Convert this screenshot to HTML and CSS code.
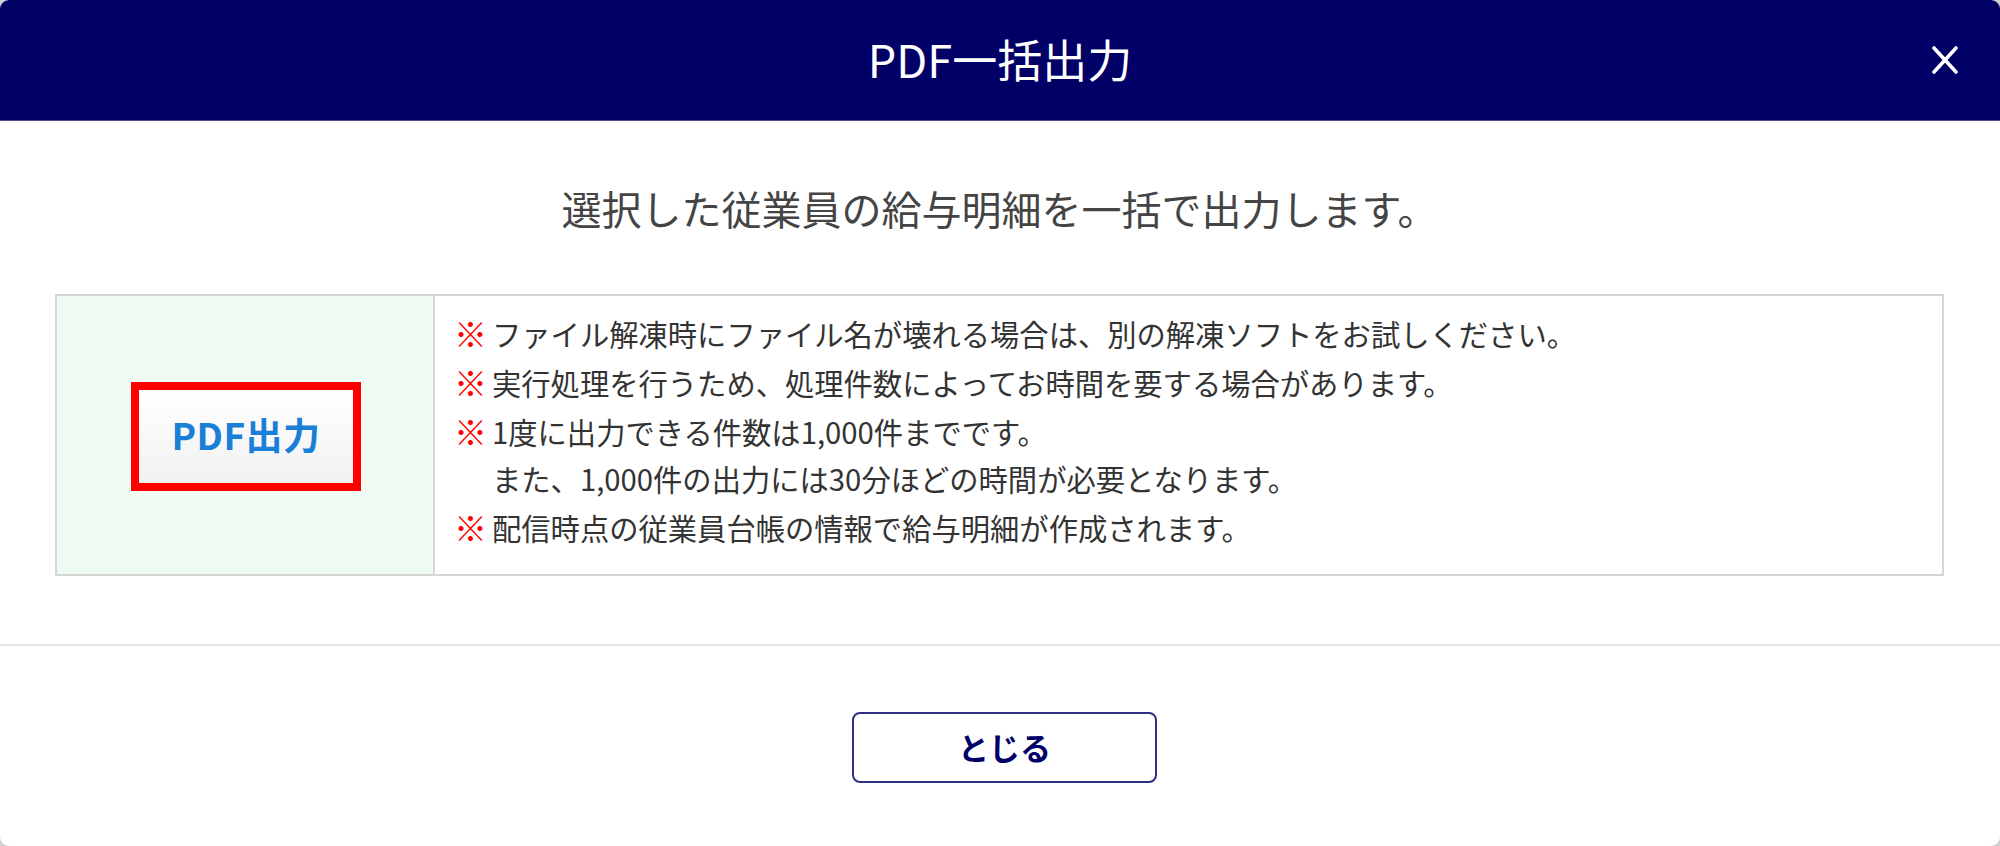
FILE: index.html
```html
<!DOCTYPE html>
<html lang="ja">
<head>
<meta charset="utf-8">
<title>PDF一括出力</title>
<link rel="stylesheet" href="styles.css">
</head>
<body>
<div class="modal">
  <header class="modal-header">
    <h1 class="modal-title">PDF一括出力</h1>
    <button class="close-btn" type="button" aria-label="閉じる">
      <svg width="26" height="28" viewBox="0 0 26 28"><path d="M2 2 L24 26 M24 2 L2 26" stroke="#ffffff" stroke-width="3.6" stroke-linecap="round" fill="none"/></svg>
    </button>
  </header>
  <main class="modal-body">
    <p class="lead">選択した従業員の給与明細を一括で出力します。</p>
    <div class="panel">
      <div class="panel-action">
        <button class="pdf-btn" type="button">PDF出力</button>
      </div>
      <ul class="notes">
        <li><span class="mark">※</span><span class="note-text">ファイル解凍時にファイル名が壊れる場合は、別の解凍ソフトをお試しください。</span></li>
        <li><span class="mark">※</span><span class="note-text">実行処理を行うため、処理件数によってお時間を要する場合があります。</span></li>
        <li><span class="mark">※</span><span class="note-text">1度に出力できる件数は1,000件までです。<br>また、1,000件の出力には30分ほどの時間が必要となります。</span></li>
        <li><span class="mark">※</span><span class="note-text">配信時点の従業員台帳の情報で給与明細が作成されます。</span></li>
      </ul>
    </div>
  </main>
  <footer class="modal-footer">
    <button class="close-text-btn" type="button">とじる</button>
  </footer>
</div>
</body>
</html>
```

FILE: styles.css
```css
* { box-sizing: border-box; }

html, body {
  margin: 0;
  padding: 0;
  background: #cfcfcf;
}

body {
  font-family: "Noto Sans CJK JP", "Noto Sans", sans-serif;
  width: 2000px;
  height: 846px;
}

.modal {
  width: 2000px;
  height: 846px;
  background: #ffffff;
  border-radius: 9px;
  overflow: hidden;
  display: flex;
  flex-direction: column;
}

.modal-header {
  height: 121px;
  background: #000066;
  border-bottom: 1px solid #50508f;
  display: grid;
  grid-template-columns: 1fr auto 1fr;
  align-items: center;
}

.modal-title {
  grid-column: 2;
  margin: 0;
  color: #ffffff;
  font-size: 45px;
  font-weight: 400;
  line-height: 60px;
  padding-bottom: 2px;
}

.close-btn {
  grid-column: 3;
  justify-self: end;
  margin-right: 42px;
  margin-bottom: 1px;
  padding: 0;
  border: 0;
  background: transparent;
  width: 26px;
  height: 28px;
  display: flex;
}

.modal-body {
  padding: 58px 56px 0 55px;
}

.lead {
  margin: 0;
  text-align: center;
  font-size: 40px;
  line-height: 58px;
  color: #444444;
}

.panel {
  margin-top: 57px;
  height: 282px;
  border: 2px solid #d6d6d6;
  display: flex;
}

.panel-action {
  width: 378px;
  flex: none;
  background: #effbf2;
  border-right: 2px solid #d6d6d6;
  display: flex;
  align-items: center;
  justify-content: center;
  padding-left: 2px;
  padding-top: 2px;
}

.pdf-btn {
  width: 230px;
  height: 109px;
  border: 8px solid #ff0000;
  background: linear-gradient(#ffffff, #f1f1f1);
  color: #1a7fd6;
  font-family: "Noto Sans CJK JP", sans-serif;
  font-size: 37px;
  font-weight: 700;
  padding: 0 0 4px;
  letter-spacing: 0.5px;
}

.notes {
  list-style: none;
  margin: 0;
  padding: 14px 20px 0 19px;
  font-size: 29.3px;
  line-height: 47px;
  color: #333333;
}

.notes li {
  display: flex;
  margin-bottom: 2px;
}

.mark {
  color: #ff0000;
  width: 38px;
  flex: none;
  font-size: 33px;
  font-weight: 700;
  line-height: 47px;
}

.modal-footer {
  margin-top: 68px;
  border-top: 2px solid #e3e3e3;
  padding-top: 66px;
  display: flex;
  justify-content: center;
}

.close-text-btn {
  width: 305px;
  height: 71px;
  margin-left: 9px;
  border: 2px solid #2f2f86;
  border-radius: 8px;
  background: #ffffff;
  color: #000066;
  font-family: "Noto Sans CJK JP", sans-serif;
  font-size: 31px;
  font-weight: 700;
  padding: 0 0 3px;
}
```
